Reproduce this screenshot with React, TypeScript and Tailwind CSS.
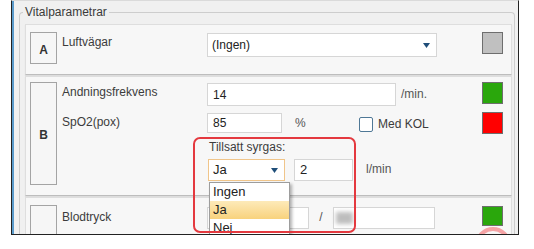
import React from "react";

const font = { fontFamily: '"Liberation Sans", Arial, sans-serif' };

function Arrow() {
  return (
    <svg width="7" height="5" viewBox="0 0 7 5" className="block">
      <path d="M0 0 H7 L3.5 5 Z" fill="#1f4e79" />
    </svg>
  );
}

function Box({ letter, h }: { letter?: string; h: string }) {
  return (
    <div
      className={`w-[27px] ${h} shrink-0 border border-[#a4a4a4] bg-[#f6f6f6] flex items-center justify-center pt-[3px] text-[12px] font-bold text-[#333]`}
    >
      {letter}
    </div>
  );
}

function Square({ color, h = "h-[22px]", mt = "mt-0" }: { color: string; h?: string; mt?: string }) {
  return <div className={`w-[21px] ${h} ${mt} shrink-0 border border-[#6e6e6e]`} style={{ backgroundColor: color }} />;
}

export default function App() {
  return (
    <div className="relative w-[534px] h-[249px] bg-white overflow-hidden text-[12px] text-[#3c3c3c]" style={font}>
      <div className="relative ml-[11px] w-[508px] h-[235px] border-x border-b border-x-[#222] border-b-[#222] border-t border-t-[#dadada] bg-[#f0f0f0] overflow-hidden flex">
        <div className="w-[2px] self-stretch bg-[#5b9bcb]" />
        <div className="flex-1">
          {/* Group box */}
          <div className="relative ml-[5px] mr-[3px] mt-[11px] h-[240px] border border-b-0 border-[#cdcdcd] rounded-t-[4px] pt-[11px] pl-[5px] pr-[2px]">
            <div className="absolute left-[3px] top-[-8px] px-[2px] bg-[#f0f0f0] leading-[14px] text-[#3a3a3a]">
              Vitalparametrar
            </div>
            <div className="flex flex-col gap-[1px]">
              {/* Panel A */}
              <div className="h-[51px] border border-[#dedede] border-b-[#bdbdbd] bg-[#f7f7f7] shadow-[0_1px_1px_rgba(0,0,0,0.08)] pt-[7px] pl-[4px] flex items-start">
                <Box letter="A" h="h-[32px]" />
                <div className="ml-[5px] w-[145px] mt-[3px] leading-[14px]">Luftvägar</div>
                <div className="w-[275px] flex">
                  <div className="mt-[1px] w-[230px] h-[24px] bg-white border border-[#d6d6d6] flex items-center justify-between pl-[4px] pr-[6px] text-[#222]">
                    <span>(Ingen)</span>
                    <Arrow />
                  </div>
                </div>
                <Square color="#c0c0c0" />
              </div>

              {/* Panel B */}
              <div className="h-[120px] border border-[#dedede] border-b-[#bdbdbd] bg-[#f7f7f7] shadow-[0_1px_1px_rgba(0,0,0,0.08)] pt-[5px] pl-[4px] flex items-start">
                <Box letter="B" h="h-[103px]" />
                <div className="ml-[5px] flex flex-col">
                  {/* Row 1 */}
                  <div className="h-[24px] flex items-start">
                    <div className="w-[145px] mt-[3px] leading-[14px]">Andningsfrekvens</div>
                    <div className="w-[275px] flex items-start">
                      <div className="mt-[1px] w-[189px] h-[23px] bg-white border border-[#d6d6d6] flex items-center pl-[5px] text-[#222]">14</div>
                      <div className="ml-[5px] mt-[5px] leading-[14px] text-[#555]">/min.</div>
                    </div>
                    <Square color="#2aa70c" />
                  </div>
                  {/* Row 2 */}
                  <div className="mt-[6px] h-[22px] flex items-start">
                    <div className="w-[145px] mt-[3px] leading-[14px]">SpO2(pox)</div>
                    <div className="w-[275px] flex items-start">
                      <div className="mt-[1px] w-[75px] h-[20px] bg-white border border-[#d6d6d6] flex items-center pl-[5px] text-[#222]">85</div>
                      <div className="w-[77px] pl-[13px] mt-[4px] leading-[14px] text-[#555]">%</div>
                      <div className="mt-[5px] w-[14px] h-[15px] bg-white border border-[#4f7896] rounded-[2px]" />
                      <div className="ml-[5px] mt-[5px] leading-[14px]">Med KOL</div>
                    </div>
                    <Square color="#ff0000" />
                  </div>
                  {/* Row 3 */}
                  <div className="mt-[6px] h-[14px] flex">
                    <div className="w-[145px]" />
                    <div className="pl-[2px] leading-[14px]">Tillsatt syrgas:</div>
                  </div>
                  {/* Row 4 */}
                  <div className="mt-[5px] h-[22px] flex items-start">
                    <div className="w-[145px]" />
                    <div className="ml-[1px] w-[77px] h-[22px] bg-white border border-[#f0c58a] flex items-center justify-between pl-[4px] pr-[6px] text-[13px] text-[#222]">
                      <span>Ja</span>
                      <Arrow />
                    </div>
                    <div className="ml-[9px] w-[59px] h-[22px] bg-white border border-[#d6d6d6] flex items-center pl-[5px] text-[13px] text-[#222]">2</div>
                    <div className="ml-[13px] mt-[3px] leading-[14px] text-[#555]">l/min</div>
                  </div>
                </div>
              </div>

              {/* Panel C */}
              <div className="h-[60px] border border-[#dedede] bg-[#f7f7f7] pt-[7px] pl-[4px] flex items-start">
                <Box h="h-[40px]" />
                <div className="ml-[5px] w-[145px] mt-[5px] leading-[14px]">Blodtryck</div>
                <div className="w-[275px] flex items-start">
                  <div className="mt-[2px] w-[102px] h-[22px] bg-white border border-[#d6d6d6]" />
                  <div className="w-[24px] mt-[5px] text-center leading-[14px] text-[#555]">/</div>
                  <div className="mt-[2px] w-[102px] h-[22px] bg-white border border-[#d6d6d6] pl-[2px] pt-[4px]">
                    <div className="w-[17px] h-[12px] bg-[#bdbdbd] blur-[2px]" />
                  </div>
                </div>
                <Square color="#2aa70c" h="h-[20px]" mt="mt-[1px]" />
              </div>
            </div>
          </div>
        </div>

        {/* Dropdown list overlay */}
        <div className="absolute left-[197px] top-[181px] w-[81px] h-[60px] bg-white border border-[#9d9d9d] shadow-[2px_2px_3px_rgba(0,0,0,0.3)] text-[13px] text-[#222]">
          <div className="h-[18px] leading-[18px] pl-[3px]">Ingen</div>
          <div className="h-[18px] leading-[18px] pl-[3px] bg-gradient-to-b from-[#fdeab9] to-[#f8d27c]">Ja</div>
          <div className="h-[18px] leading-[18px] pl-[3px]">Nej</div>
        </div>

        {/* Red annotation rectangle */}
        <div className="absolute left-[181px] top-[136px] w-[163px] h-[96px] border-2 border-[#e4393f] rounded-[7px]" />

        {/* Pink arc */}
        <div className="absolute left-[463px] top-[226px] w-[36px] h-[36px] border-[4px] border-[#f5a3a5] rounded-full" />
      </div>
    </div>
  );
}
